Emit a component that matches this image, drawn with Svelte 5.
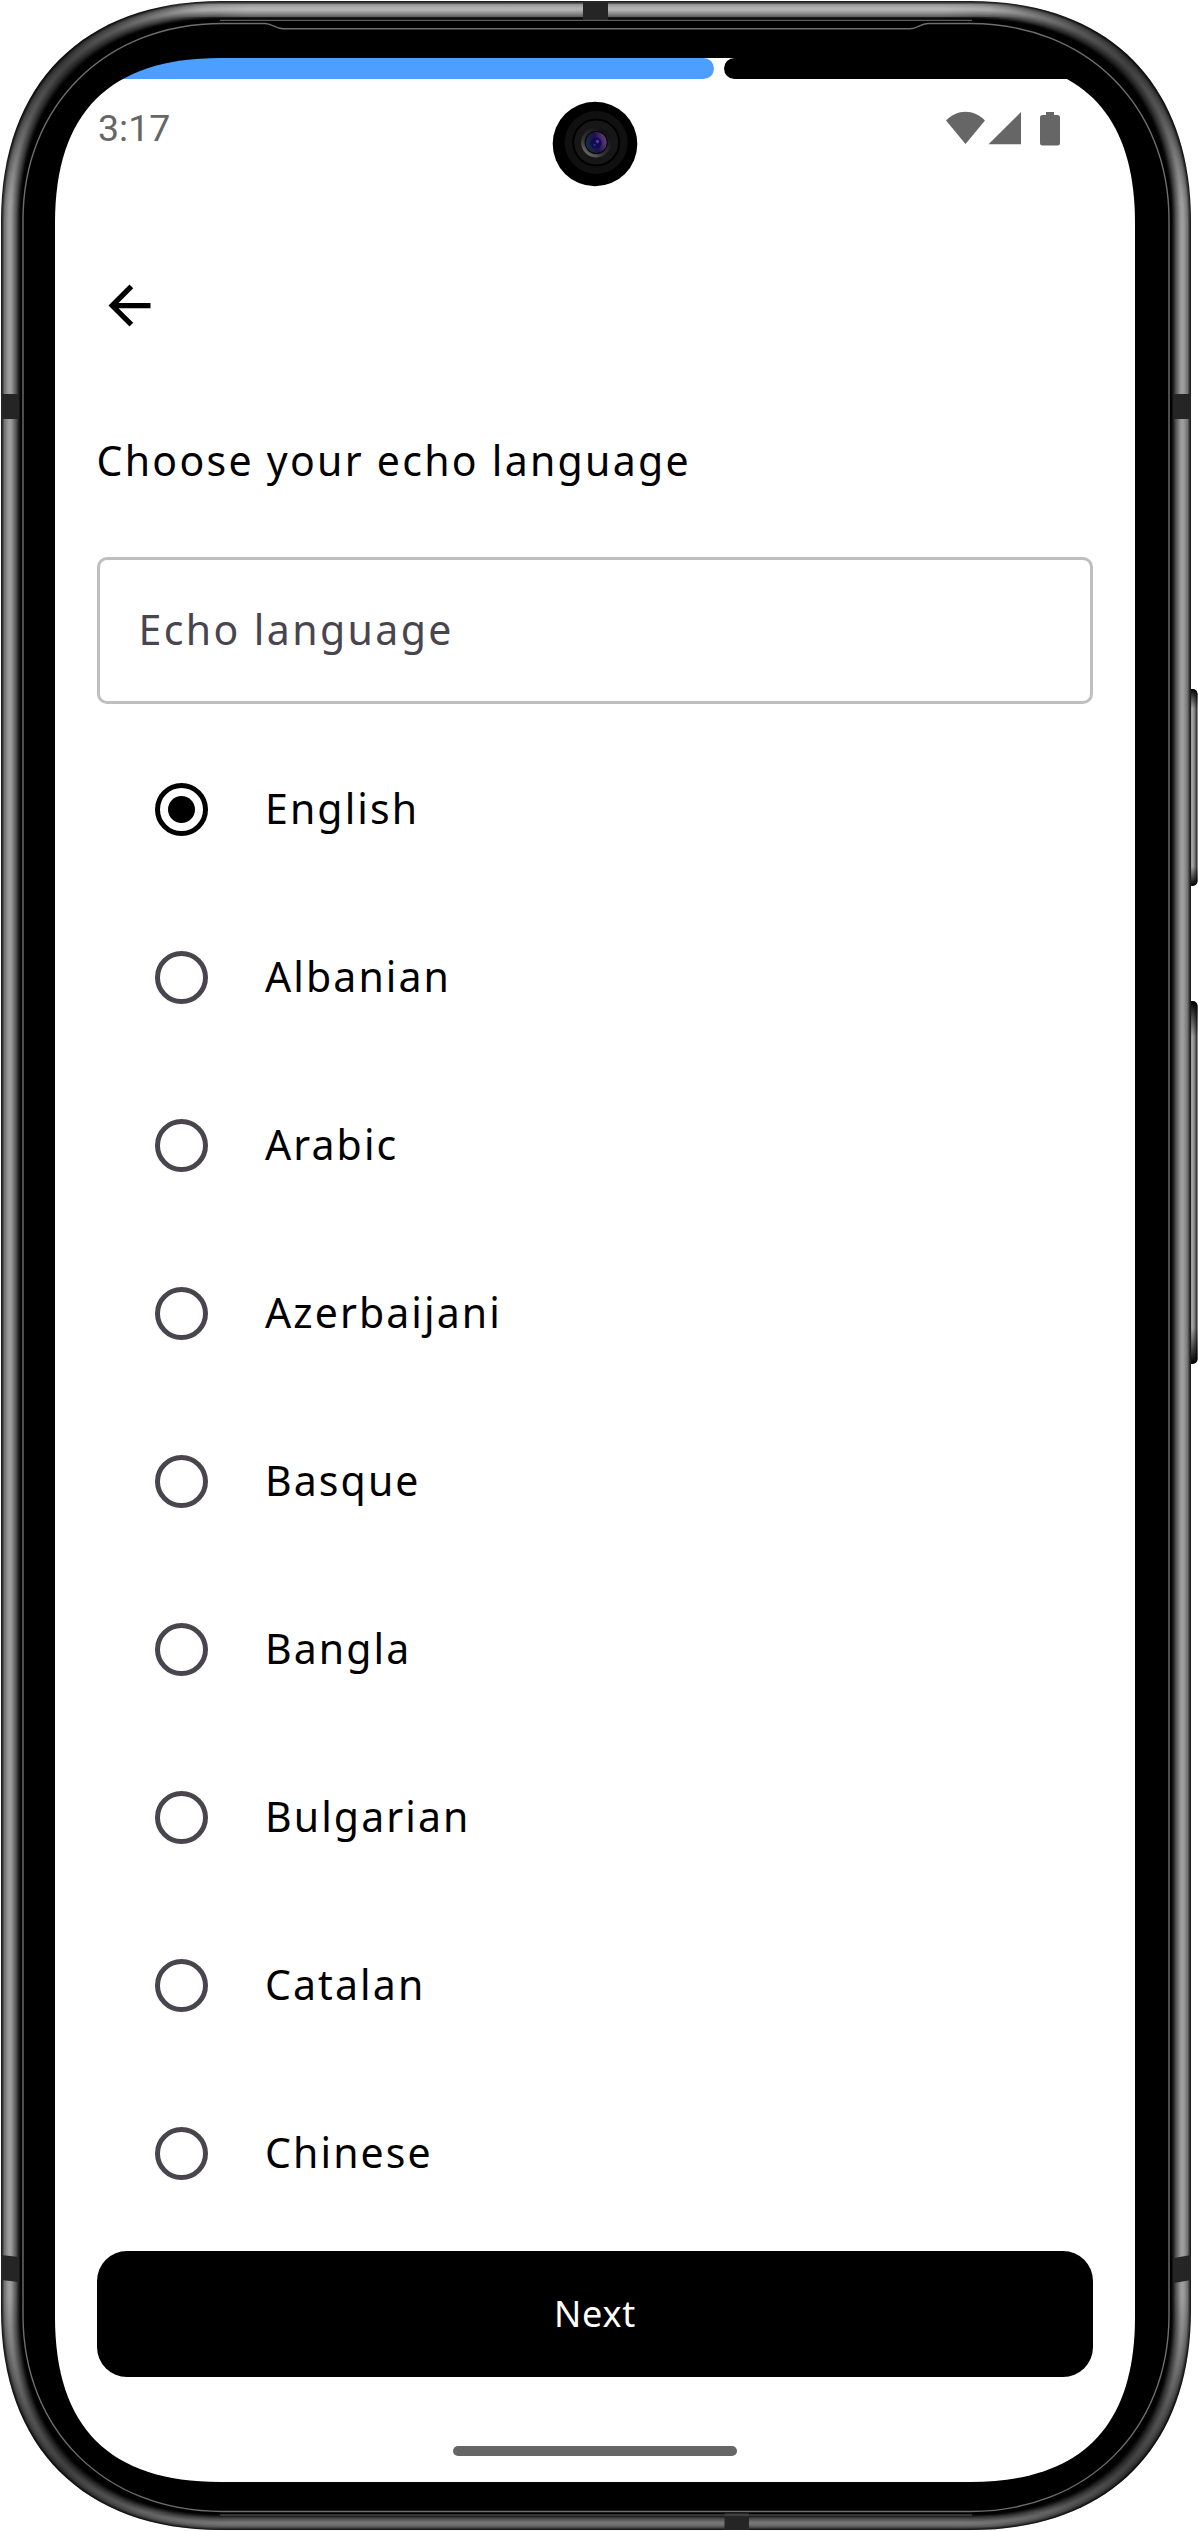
<script>
  const languages = ['English', 'Albanian', 'Arabic', 'Azerbaijani', 'Basque', 'Bangla', 'Bulgarian', 'Catalan', 'Chinese'];
  let selected = $state('English');

  // Closed rounded outline: r is the corner extent, k the bezier handle fraction.
  function outline(x0, y0, x1, y1, r, k) {
    const c = r * (1 - k);
    return `M${x0 + r} ${y0}H${x1 - r}C${x1 - c} ${y0} ${x1} ${y0 + c} ${x1} ${y0 + r}V${y1 - r}C${x1} ${y1 - c} ${x1 - c} ${y1} ${x1 - r} ${y1}H${x0 + r}C${x0 + c} ${y1} ${x0} ${y1 - c} ${x0} ${y1 - r}V${y0 + r}C${x0} ${y0 + c} ${x0 + c} ${y0} ${x0 + r} ${y0}Z`;
  }

  // Metal rim shading, from the outer edge inwards.
  const tones = [28, 50, 84, 112, 126, 136, 146, 154, 158, 156, 148, 136, 120, 106, 92, 76, 56, 36, 18, 5, 0];
  const rim = tones.map((t, i) => ({
    d: outline(1 + i, 1 + i * 0.92, 1191 - i, 2530 - i * 0.8, 220 - i, 0.624),
    fill: `rgb(${t},${t},${t})`
  }));
  const outer = rim[0].d;
  const glass =
    'M265 23.5C272 23.5 275 28.7 283 28.7H910C918 28.7 920 23.5 928 23.5H970C1087 23.5 1169 106 1169 220V2315C1169 2430 1087 2511.5 970 2511.5H222C105 2511.5 23 2430 23 2315V220C23 106 105 23.5 222 23.5Z';
</script>

<div class="device">
  <svg class="frame" viewBox="0 0 1198 2531" aria-hidden="true">
    <defs>
      <linearGradient id="key" x1="0" x2="1" y1="0" y2="0">
        <stop offset="0" stop-color="#555" />
        <stop offset=".5" stop-color="#aaa" />
        <stop offset=".75" stop-color="#777" />
        <stop offset="1" stop-color="#151515" />
      </linearGradient>
      <linearGradient id="keyends" x1="0" x2="0" y1="0" y2="1">
        <stop offset="0" stop-color="#000" />
        <stop offset=".1" stop-color="#000" stop-opacity="0" />
        <stop offset=".9" stop-color="#000" stop-opacity="0" />
        <stop offset="1" stop-color="#000" />
      </linearGradient>
      <radialGradient id="shade">
        <stop offset="0" stop-color="#000" stop-opacity=".6" />
        <stop offset=".4" stop-color="#000" stop-opacity=".45" />
        <stop offset="1" stop-color="#000" stop-opacity="0" />
      </radialGradient>
      <linearGradient id="lift" x1="0" x2="1" y1="0" y2="0">
        <stop offset="0" stop-color="#fff" stop-opacity="0" />
        <stop offset=".1" stop-color="#fff" stop-opacity=".22" />
        <stop offset=".9" stop-color="#fff" stop-opacity=".22" />
        <stop offset="1" stop-color="#fff" stop-opacity="0" />
      </linearGradient>
      <linearGradient id="dim" x1="0" x2="1" y1="0" y2="0">
        <stop offset="0" stop-color="#000" stop-opacity="0" />
        <stop offset=".12" stop-color="#000" stop-opacity=".25" />
        <stop offset=".88" stop-color="#000" stop-opacity=".25" />
        <stop offset="1" stop-color="#000" stop-opacity="0" />
      </linearGradient>
      <clipPath id="body"><path d={outer} /></clipPath>
    </defs>
    {#each [[689, 197], [1001, 363]] as [y, h]}
      <rect x="1187" {y} width="10.5" height={h} rx="5" fill="url(#key)" />
      <rect x="1187" {y} width="10.5" height={h} rx="5" fill="url(#keyends)" />
    {/each}
    {#each rim as layer}
      <path d={layer.d} fill={layer.fill} />
    {/each}
    <g clip-path="url(#body)">
      <rect x="160" y="4" width="872" height="13" fill="url(#lift)" />
      <rect x="120" y="2513" width="952" height="18" fill="url(#dim)" />
      <circle cx="62" cy="62" r="150" fill="url(#shade)" />
      <circle cx="1130" cy="62" r="150" fill="url(#shade)" />
      <circle cx="62" cy="2469" r="180" fill="url(#shade)" />
      <circle cx="1130" cy="2469" r="180" fill="url(#shade)" />
      <g fill="#252525">
        <rect x="583" y="1" width="25" height="20" />
        <rect x="1" y="394" width="18" height="25" />
        <rect x="1174" y="394" width="17" height="25" />
        <path d="M1 2255l18 2v25l-18-2zM1191 2255l-17 3v25l17-3z" />
        <rect x="724.500" y="2513" width="24.500" height="17" />
      </g>
    </g>
    <path d={glass} fill="#000" stroke="#6e6e6e" stroke-width="1.4" />
    <path d="M220 20.3H972M220 2515H972" stroke="#5c5c5c" stroke-width="1.2" />
  </svg>

  <main class="screen">
    <div class="progress"><span class="done"></span><span class="rest"></span></div>

    <header class="status">
      <span class="clock">3:17</span>
      <svg class="indicators" width="116" height="36" viewBox="0 0 116 36" fill="#666">
        <path d="M0 9.500C11 -2.200 28 -2.200 39 9.500L19.500 33Z" />
        <path d="M75 1V33.300H42.500Z" />
        <path d="M100 1h8v3h3.500a2.500 2.500 0 0 1 2.500 2.500V32a2.500 2.500 0 0 1-2.500 2.500H96.500a2.500 2.500 0 0 1-2.500-2.500V6.500A2.500 2.500 0 0 1 96.500 4H100z" />
      </svg>
    </header>

    <button class="back" aria-label="Back">
      <svg width="63" height="63" viewBox="0 0 24 24"><path d="M20 11H7.83l5.59-5.59L12 4l-8 8 8 8 1.410-1.410L7.830 13H20v-2z" /></svg>
    </button>

    <h1>Choose your echo language</h1>
    <div class="field">Echo language</div>

    <ul>
      {#each languages as language}
        <li>
          <button class="option" onclick={() => (selected = language)}>
            <span class="radio" class:checked={selected === language}></span>
            <span class="label">{language}</span>
          </button>
        </li>
      {/each}
    </ul>

    <button class="next">Next</button>
    <div class="home"></div>
  </main>

  <svg class="camera" width="86" height="86" viewBox="-43 -43 86 86" aria-hidden="true">
    <defs>
      <linearGradient id="ring" x1="0" y1="1" x2=".8" y2="0">
        <stop offset="0" stop-color="#8a8a8a" />
        <stop offset=".4" stop-color="#333" />
        <stop offset="1" stop-color="#0c0c0c" />
      </linearGradient>
      <linearGradient id="lens" x1="0" y1=".6" x2="1" y2=".3">
        <stop offset="0" stop-color="#12303a" />
        <stop offset=".5" stop-color="#1a1350" />
        <stop offset="1" stop-color="#6d3e80" />
      </linearGradient>
    </defs>
    <circle r="42.3" />
    <circle cx="1.2" cy="-1.5" r="31.5" fill="#101010" />
    <circle cx="1.2" cy="-1.5" r="23" fill="#171717" stroke="#000" stroke-width="2" />
    <circle cx="1.2" cy="-1.5" r="15" fill="url(#ring)" />
    <circle cx="1.2" cy="-1.5" r="11.5" fill="#030308" />
    <circle cx="1.2" cy="-1.5" r="10.5" fill="url(#lens)" />
    <circle cx="1" cy="-1" r="5.5" fill="#120b48" />
    <circle cx="2.5" cy="-2.5" r="1.8" fill="#4b35c0" />
    <circle cx="-.5" cy="1" r="1.3" fill="#2a2aa0" />
  </svg>
</div>

<style>
  :global(body) {
    margin: 0;
    background: #fff;
  }
  .device {
    position: relative;
    width: 1198px;
    height: 2531px;
    box-sizing: border-box;
    padding: 58px 63px 49px 55px;
    font-family: 'Noto Sans', sans-serif;
    color: #000;
  }
  .frame {
    position: absolute;
    inset: 0;
    width: 1198px;
    height: 2531px;
  }
  .camera {
    position: absolute;
    left: 552px;
    top: 101px;
  }
  .screen {
    position: relative;
    width: 1080px;
    height: 2424px;
    display: flex;
    flex-direction: column;
    /* White starts below the progress strip, and shows in the gap between its segments. */
    background:
      linear-gradient(#fff, #fff) 0 21px / 100% 100% no-repeat,
      linear-gradient(#fff, #fff) 600px 0 / 90px 21px no-repeat;
    clip-path: path('M165 0H915C1025.5 0 1080 54.5 1080 165V2259C1080 2369.5 1025.5 2424 915 2424H165C54.5 2424 0 2369.5 0 2259V165C0 54.5 54.5 0 165 0Z');
  }
  button {
    border: 0;
    margin: 0;
    padding: 0;
    background: none;
    font: inherit;
    color: inherit;
  }
  .progress {
    display: flex;
    gap: 10px;
    height: 21px;
    flex: none;
  }
  .done {
    width: 658.5px;
    background: #4c9eff;
    border-radius: 0 10.5px 10.5px 0;
  }
  .rest {
    flex: 1;
    background: #000;
    border-radius: 10.5px 0 0 10.5px;
  }
  .status {
    display: flex;
    justify-content: space-between;
    align-items: center;
    height: 100px;
    padding: 0 73px 0 43px;
    color: #666;
  }
  .clock {
    font: 37.5px/44px Roboto, sans-serif;
    padding-bottom: 2px;
  }
  .back {
    width: 63px;
    height: 63px;
    margin: 95px 0 0 43px;
  }
  .back svg {
    display: block;
  }
  h1 {
    margin: 93px 0 0 41.5px;
    height: 60px;
    font-size: 41px;
    line-height: 61px;
    font-weight: 400;
    letter-spacing: 2.28px;
    white-space: nowrap;
  }
  .field {
    box-sizing: border-box;
    width: 996px;
    height: 147px;
    margin: 67px 42px 0;
    padding: 0 38.5px;
    border: 3px solid #bfbfbf;
    border-radius: 10px;
    font-size: 41px;
    line-height: 138px;
    letter-spacing: 2.4px;
    color: #49454f;
  }
  ul {
    list-style: none;
    margin: 21px 0 0;
    padding: 0 42px;
    height: 1526px;
    box-sizing: border-box;
    overflow: hidden;
  }
  .option {
    display: flex;
    align-items: center;
    width: 100%;
    height: 168px;
    padding-left: 57.5px;
    gap: 57.5px;
    text-align: left;
  }
  .radio {
    box-sizing: border-box;
    width: 53px;
    height: 53px;
    border: 5.5px solid #49454f;
    border-radius: 50%;
    display: grid;
    place-items: center;
  }
  .radio.checked {
    border-color: #000;
  }
  .radio.checked::after {
    content: '';
    width: 27px;
    height: 27px;
    border-radius: 50%;
    background: #000;
  }
  .label {
    font-size: 41px;
    line-height: 50px;
    padding-bottom: 3px;
    letter-spacing: 2.1px;
  }
  .next {
    width: 996px;
    height: 126px;
    flex: none;
    margin: 0 42px;
    padding-bottom: 2px;
    border-radius: 30px;
    background: #000;
    color: #fff;
    font-size: 36px;
    letter-spacing: 0.8px;
  }
  .home {
    width: 284px;
    height: 10px;
    margin: 69px auto 0;
    border-radius: 5px;
    background: #666;
  }
</style>
